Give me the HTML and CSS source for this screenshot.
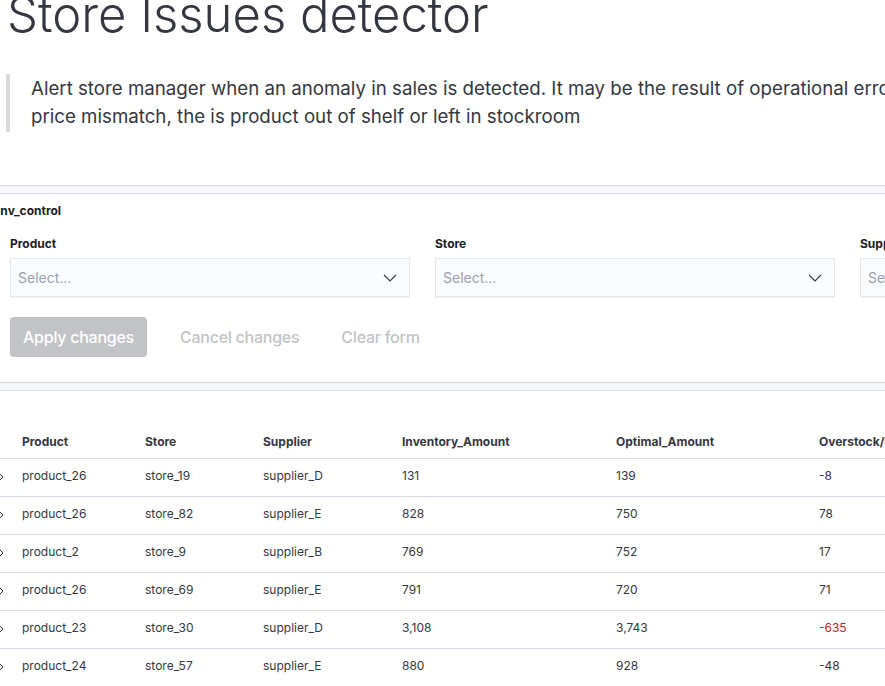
FILE: index.html
```html
<!DOCTYPE html>
<html>
<head>
<meta charset="utf-8">
<link rel="stylesheet" href="styles.css">
</head>
<body>
<div class="page">
  <section class="intro">
    <h1 class="title">Store Issues detector</h1>
    <blockquote class="quote">Alert store manager when an anomaly in sales is detected. It may be the result of operational error, price mismatch, the is product out of shelf or left in stockroom</blockquote>
  </section>
  <div class="gap"></div>
  <section class="panel form-panel">
    <div class="panel-title">Inv_control</div>
    <div class="fields">
      <div class="field">
        <label class="label">Product</label>
        <div class="select"><span class="placeholder">Select...</span>
          <svg class="caret" width="14" height="8" viewBox="0 0 14 8"><path d="M1 1l6 6 6-6" fill="none" stroke="#343741" stroke-width="1.1"/></svg>
        </div>
      </div>
      <div class="field">
        <label class="label">Store</label>
        <div class="select"><span class="placeholder">Select...</span>
          <svg class="caret" width="14" height="8" viewBox="0 0 14 8"><path d="M1 1l6 6 6-6" fill="none" stroke="#343741" stroke-width="1.1"/></svg>
        </div>
      </div>
      <div class="field">
        <label class="label">Supplier</label>
        <div class="select"><span class="placeholder">Select...</span>
          <svg class="caret" width="14" height="8" viewBox="0 0 14 8"><path d="M1 1l6 6 6-6" fill="none" stroke="#343741" stroke-width="1.1"/></svg>
        </div>
      </div>
    </div>
    <div class="actions">
      <button class="btn btn-fill">Apply changes</button>
      <button class="btn btn-empty">Cancel changes</button>
      <button class="btn btn-empty">Clear form</button>
    </div>
  </section>
  <div class="gap"></div>
  <section class="panel table-panel">
    <table class="grid">
      <thead>
        <tr>
          <th class="c-exp"></th>
          <th class="c1">Product</th>
          <th class="c2">Store</th>
          <th class="c3">Supplier</th>
          <th class="c4">Inventory_Amount</th>
          <th class="c5">Optimal_Amount</th>
          <th class="c6">Overstock/Understock</th>
        </tr>
      </thead>
      <tbody>
        <tr><td class="c-exp"><svg class="exp" width="16" height="16" viewBox="0 0 16 16"><path d="M5 4l4 4-4 4" fill="none" stroke="#343741" stroke-width="1"/></svg></td><td>product_26</td><td>store_19</td><td>supplier_D</td><td>131</td><td>139</td><td>-8</td></tr>
        <tr><td class="c-exp"><svg class="exp" width="16" height="16" viewBox="0 0 16 16"><path d="M5 4l4 4-4 4" fill="none" stroke="#343741" stroke-width="1"/></svg></td><td>product_26</td><td>store_82</td><td>supplier_E</td><td>828</td><td>750</td><td>78</td></tr>
        <tr><td class="c-exp"><svg class="exp" width="16" height="16" viewBox="0 0 16 16"><path d="M5 4l4 4-4 4" fill="none" stroke="#343741" stroke-width="1"/></svg></td><td>product_2</td><td>store_9</td><td>supplier_B</td><td>769</td><td>752</td><td>17</td></tr>
        <tr><td class="c-exp"><svg class="exp" width="16" height="16" viewBox="0 0 16 16"><path d="M5 4l4 4-4 4" fill="none" stroke="#343741" stroke-width="1"/></svg></td><td>product_26</td><td>store_69</td><td>supplier_E</td><td>791</td><td>720</td><td>71</td></tr>
        <tr><td class="c-exp"><svg class="exp" width="16" height="16" viewBox="0 0 16 16"><path d="M5 4l4 4-4 4" fill="none" stroke="#343741" stroke-width="1"/></svg></td><td>product_23</td><td>store_30</td><td>supplier_D</td><td>3,108</td><td>3,743</td><td class="neg">-635</td></tr>
        <tr><td class="c-exp"><svg class="exp" width="16" height="16" viewBox="0 0 16 16"><path d="M5 4l4 4-4 4" fill="none" stroke="#343741" stroke-width="1"/></svg></td><td>product_24</td><td>store_57</td><td>supplier_E</td><td>880</td><td>928</td><td>-48</td></tr>
        <tr><td class="c-exp"><svg class="exp" width="16" height="16" viewBox="0 0 16 16"><path d="M5 4l4 4-4 4" fill="none" stroke="#343741" stroke-width="1"/></svg></td><td>product_11</td><td>store_41</td><td>supplier_A</td><td>512</td><td>540</td><td>-28</td></tr>
      </tbody>
    </table>
  </section>
</div>
</body>
</html>
```

FILE: styles.css
```css
html, body {
  margin: 0;
  padding: 0;
  background: #ffffff;
  overflow: hidden;
}
body {
  font-family: Inter, "Noto Sans", sans-serif;
  color: #343741;
}
.page {
  width: 1500px;
  margin-left: -20px;
}
.intro {
  display: flow-root;
  background: #ffffff;
  padding: 0 0 0 27px;
  height: 185px;
  box-shadow: 0 1px 1px rgba(0, 0, 0, 0.12);
  position: relative;
  z-index: 1;
}
.title {
  margin: -13px 0 0 0;
  font-size: 49px;
  line-height: 56px;
  font-weight: 300;
  color: #343741;
  letter-spacing: 0;
}
.quote {
  margin: 31px 0 0 -1px;
  padding: 1px 0 1px 21px;
  border-left: 4px solid #dadada;
  font-size: 18.7px;
  line-height: 28px;
  color: #343741;
  width: 900px;
}
.gap {
  height: 8px;
  background: #f5f7fa;
}
.panel {
  background: #ffffff;
  border-top: 1px solid #d3dae6;
}
.form-panel {
  display: flow-root;
  height: 188px;
  box-shadow: 0 1px 1px rgba(0, 0, 0, 0.14);
  position: relative;
  z-index: 1;
}
.panel-title {
  font-size: 12px;
  font-weight: 700;
  color: #1a1c21;
  line-height: 16px;
  padding: 9px 0 0 17px;
}
.fields {
  display: flex;
  gap: 25px;
  padding: 17px 0 0 30px;
}
.field {
  width: 400px;
  display: flex;
  flex-direction: column;
}
.label {
  font-size: 12px;
  font-weight: 700;
  color: #1a1c21;
  line-height: 16px;
  margin-bottom: 6px;
}
.select {
  height: 39px;
  box-sizing: border-box;
  background: #fbfcfd;
  border: 1px solid #e3e7ee;
  box-shadow: 0 1px 1px rgba(0, 0, 0, 0.04);
  display: flex;
  align-items: center;
  justify-content: space-between;
  padding: 0 12px 0 7px;
}
.placeholder {
  font-size: 14px;
  color: #98a2b3;
}
.caret {
  display: block;
}
.actions {
  display: flex;
  align-items: center;
  padding: 20px 0 0 30px;
}
.btn {
  font-family: Inter, "Noto Sans", sans-serif;
  font-size: 16px;
  font-weight: 500;
  letter-spacing: -0.25px;
  height: 40px;
  border: none;
  border-radius: 4px;
  background: transparent;
  padding: 0 13px;
  cursor: default;
}
.btn-fill {
  background: #c2c3c6;
  color: #ffffff;
  margin-right: 20px;
}
.btn-empty {
  color: #c2c3c6;
  margin-right: 16px;
}
.table-panel {
  padding-top: 34px;
}
.grid {
  border-collapse: collapse;
  table-layout: fixed;
  width: 1131px;
  font-size: 12px;
  color: #343741;
}
.grid th, .grid td {
  box-sizing: border-box;
  text-align: left;
  padding: 0 8px;
  border-bottom: 1px solid #d3dae6;
  vertical-align: middle;
}
.grid th {
  font-weight: 700;
  color: #343741;
  height: 33px;
}
.grid td {
  height: 38px;
  padding-bottom: 3px;
}
.grid .c-exp {
  padding: 0;
}
.c-exp { width: 34px; }
.c1 { width: 123px; }
.c2 { width: 118px; }
.c3 { width: 139px; }
.c4 { width: 214px; }
.c5 { width: 203px; }
.c6 { width: 300px; }
.exp {
  display: block;
  margin-left: 14px;
}
.neg {
  color: #bd271e;
}
```
